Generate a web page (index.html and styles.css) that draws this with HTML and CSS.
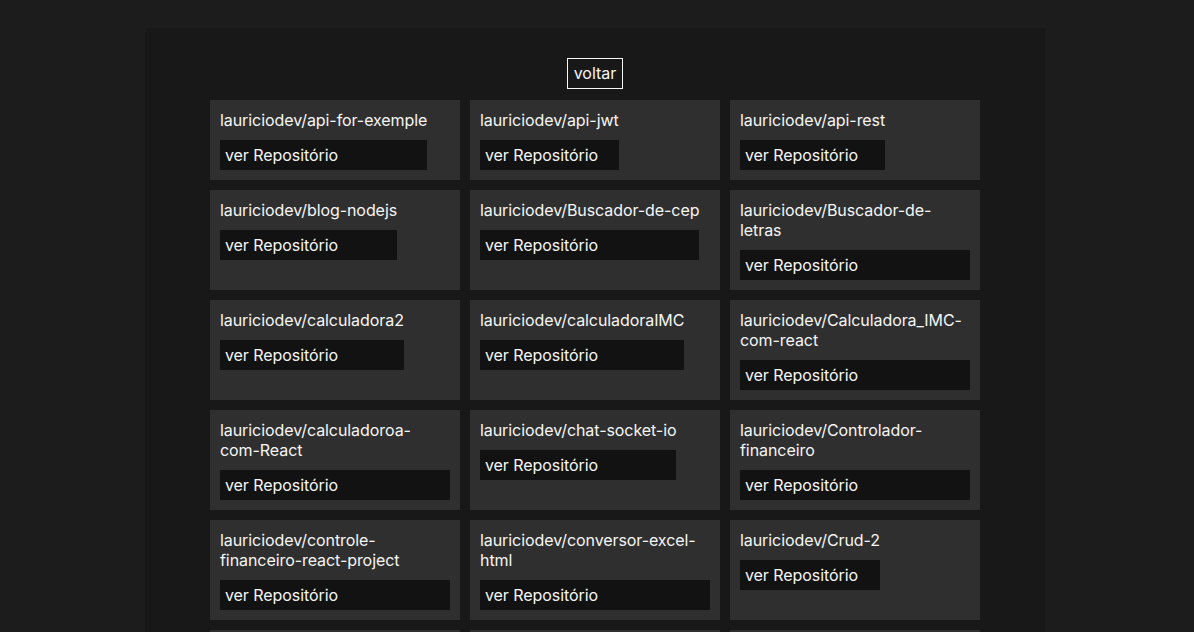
FILE: index.html
```html
<!DOCTYPE html>
<html lang="pt-BR">
<head>
<meta charset="utf-8">
<title>Repositórios</title>
<link rel="stylesheet" href="styles.css">
</head>
<body>
<main class="container">
  <div class="top">
    <button class="back">voltar</button>
  </div>
  <section class="grid">
    <div class="card"><div class="inner"><p class="name">lauriciodev/api-for-exemple</p><a class="repo">ver Repositório</a></div></div>
    <div class="card"><div class="inner"><p class="name">lauriciodev/api-jwt</p><a class="repo">ver Repositório</a></div></div>
    <div class="card"><div class="inner"><p class="name">lauriciodev/api-rest</p><a class="repo">ver Repositório</a></div></div>
    <div class="card"><div class="inner"><p class="name">lauriciodev/blog-nodejs</p><a class="repo">ver Repositório</a></div></div>
    <div class="card"><div class="inner"><p class="name">lauriciodev/Buscador-de-cep</p><a class="repo">ver Repositório</a></div></div>
    <div class="card"><div class="inner"><p class="name">lauriciodev/Buscador-de-letras</p><a class="repo">ver Repositório</a></div></div>
    <div class="card"><div class="inner"><p class="name">lauriciodev/calculadora2</p><a class="repo">ver Repositório</a></div></div>
    <div class="card"><div class="inner"><p class="name">lauriciodev/calculadoraIMC</p><a class="repo">ver Repositório</a></div></div>
    <div class="card"><div class="inner"><p class="name">lauriciodev/Calculadora_IMC-com-react</p><a class="repo">ver Repositório</a></div></div>
    <div class="card"><div class="inner"><p class="name">lauriciodev/calculadoroa-com-React</p><a class="repo">ver Repositório</a></div></div>
    <div class="card"><div class="inner"><p class="name">lauriciodev/chat-socket-io</p><a class="repo">ver Repositório</a></div></div>
    <div class="card"><div class="inner"><p class="name">lauriciodev/Controlador-financeiro</p><a class="repo">ver Repositório</a></div></div>
    <div class="card"><div class="inner"><p class="name">lauriciodev/controle-financeiro-react-project</p><a class="repo">ver Repositório</a></div></div>
    <div class="card"><div class="inner"><p class="name">lauriciodev/conversor-excel-html</p><a class="repo">ver Repositório</a></div></div>
    <div class="card"><div class="inner"><p class="name">lauriciodev/Crud-2</p><a class="repo">ver Repositório</a></div></div>
    <div class="card"><div class="inner"><p class="name">lauriciodev/dashboard</p><a class="repo">ver Repositório</a></div></div>
    <div class="card"><div class="inner"><p class="name">lauriciodev/desafio-frontend</p><a class="repo">ver Repositório</a></div></div>
    <div class="card"><div class="inner"><p class="name">lauriciodev/ecommerce</p><a class="repo">ver Repositório</a></div></div>
  </section>
</main>
</body>
</html>
```

FILE: styles.css
```css
html, body {
  margin: 0;
  padding: 0;
  background: #1c1c1c;
}
body {
  padding: 28px 4px 0 0;
  font-family: Inter, "Noto Sans", sans-serif;
  font-size: 16px;
  line-height: 20px;
  letter-spacing: -0.07px;
  color: #f6f6f6;
}
.container {
  width: 900px;
  margin: 0 auto;
  background: #181818;
  padding: 30px 0 20px;
  box-sizing: border-box;
}
.top {
  display: flex;
  justify-content: center;
  margin-bottom: 11px;
}
.back {
  font: inherit;
  line-height: 19px;
  color: #f6f6f6;
  background: transparent;
  border: 1px solid #f6f6f6;
  padding: 5px 6px;
  margin: 0;
}
.grid {
  display: grid;
  grid-template-columns: repeat(3, 250px);
  gap: 10px;
  justify-content: center;
}
.card {
  background: #2f2f2f;
  padding: 10px;
}
.inner {
  width: fit-content;
  max-width: 230px;
  display: flex;
  flex-direction: column;
}
.name {
  margin: 0 0 10px;
  overflow-wrap: break-word;
}
.repo {
  display: block;
  background: #121212;
  padding: 5px;
  color: #f6f6f6;
  white-space: nowrap;
}
```
